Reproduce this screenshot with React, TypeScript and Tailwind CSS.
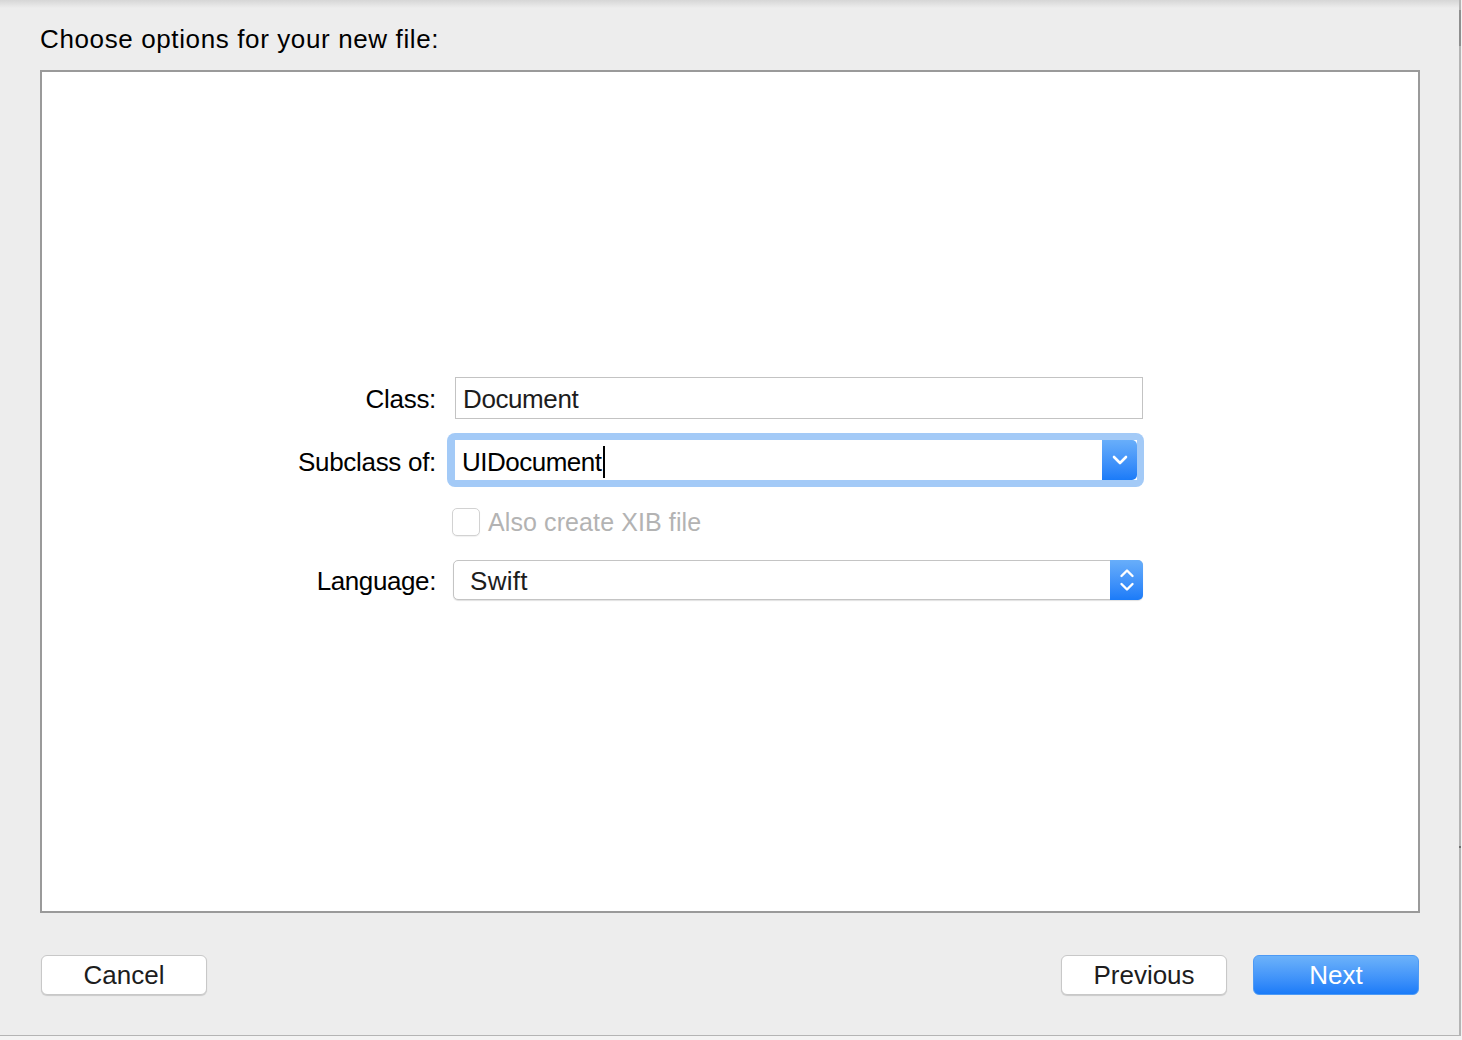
import React from "react";

const font = { fontFamily: '"Liberation Sans", Arial, sans-serif' };

export default function App() {
  return (
    <div className="w-[1462px] h-[1040px] bg-[#f3f3f3] overflow-hidden" style={font}>
      <div className="relative w-[1461px] h-[1036px] bg-[#ededed] border-r-2 border-b border-[#b4b4b4] flex flex-col">
        <div className="absolute left-0 right-0 top-0 h-[8px] bg-gradient-to-b from-[#d6d6d6] to-[#ededed]" />
        <div className="absolute right-[-2px] top-[10px] w-[2px] h-[36px] bg-[#8e8e8e]" />
        <div className="absolute right-[-2px] top-[846px] w-[2px] h-[2px] bg-[#6e6e6e]" />

        <div className="pl-[40px] pt-[24px] h-[70px] text-[26px] leading-[30px] tracking-[0.62px] text-black">
          Choose options for your new file:
        </div>

        <div className="ml-[40px] w-[1380px] h-[843px] border-2 border-[#9a9a9a] bg-white flex flex-col pt-[305px] text-[26px] text-black">
          {/* Class row */}
          <div className="flex items-center h-[42px]">
            <div className="w-[394px] text-right pt-[2px] tracking-[-0.3px]">Class:</div>
            <div className="ml-[19px] w-[688px] h-[42px] border border-[#c3c3c3] bg-white flex items-center pl-[7px] pt-[2px] text-[#1d1d1d] tracking-[-0.4px]">
              Document
            </div>
          </div>

          {/* Subclass row */}
          <div className="flex items-center h-[54px] mt-[14px]">
            <div className="w-[394px] text-right pt-[5px] tracking-[-0.3px]">Subclass of:</div>
            <div className="ml-[11px] w-[697px] h-[54px] rounded-[8px] bg-[#a3caf7] pl-[8px] pr-[7px] py-[7px]">
              <div className="flex h-[40px] bg-white">
                <div className="flex-1 flex items-center pl-[7px] text-black">
                  <span className="pt-[4px] tracking-[-0.5px]">UIDocument</span>
                  <span className="inline-block w-[2px] h-[32px] bg-black ml-[1px] mt-[4px]" />
                </div>
                <div className="w-[35px] h-[40px] rounded-r-[5px] bg-gradient-to-b from-[#68aefa] to-[#1a7bf8] flex items-center justify-center">
                  <svg width="16" height="10" viewBox="0 0 16 10">
                    <path d="M2 2 L8 8 L14 2" stroke="white" strokeWidth="2.6" fill="none" strokeLinecap="round" strokeLinejoin="round" />
                  </svg>
                </div>
              </div>
            </div>
          </div>

          {/* Checkbox row */}
          <div className="flex items-center h-[28px] mt-[21px]">
            <div className="w-[394px]" />
            <div className="ml-[16px] w-[28px] h-[28px] rounded-[5px] border border-[#d2d2d2] bg-white shadow-[0_1px_1px_rgba(0,0,0,0.06)]" />
            <div className="ml-[8px] pt-[1px] text-[25px] text-[#b3b3b3] tracking-[0.1px]">Also create XIB file</div>
          </div>

          {/* Language row */}
          <div className="flex items-center h-[40px] mt-[24px]">
            <div className="w-[394px] text-right pt-[2px] tracking-[-0.4px]">Language:</div>
            <div className="ml-[17px] w-[690px] h-[40px] rounded-[5px] border border-[#c4c4c4] bg-white shadow-[0_1px_1px_rgba(0,0,0,0.12)] flex">
              <div className="flex-1 flex items-center pl-[16px] pt-[2px] text-[#1d1d1d] tracking-[0.3px]">Swift</div>
              <div className="w-[33px] h-[40px] mt-[-1px] mr-[-1px] rounded-r-[5px] bg-gradient-to-b from-[#68aefa] to-[#1a7bf8] flex items-center justify-center">
                <svg width="16" height="28" viewBox="0 0 16 28">
                  <path d="M2.5 10 L8 4.5 L13.5 10" stroke="white" strokeWidth="2.4" fill="none" strokeLinecap="round" strokeLinejoin="round" />
                  <path d="M2.5 18 L8 23.5 L13.5 18" stroke="white" strokeWidth="2.4" fill="none" strokeLinecap="round" strokeLinejoin="round" />
                </svg>
              </div>
            </div>
          </div>
        </div>

        <div className="flex items-center mt-[42px] pl-[41px] pr-[40px] text-[26px]">
          <button className="w-[166px] h-[40px] rounded-[6px] bg-white border border-[#c8c8c8] shadow-[0_1px_1px_rgba(0,0,0,0.15)] text-[#1d1d1d] flex items-center justify-center">
            Cancel
          </button>
          <div className="flex-1" />
          <button className="w-[166px] h-[40px] rounded-[6px] bg-white border border-[#c8c8c8] shadow-[0_1px_1px_rgba(0,0,0,0.15)] text-[#1d1d1d] flex items-center justify-center">
            Previous
          </button>
          <button className="ml-[26px] w-[166px] h-[40px] rounded-[6px] bg-gradient-to-b from-[#6cb2fa] to-[#1a7bf8] border border-[#4d9af5] text-white flex items-center justify-center">
            Next
          </button>
        </div>
      </div>
    </div>
  );
}
